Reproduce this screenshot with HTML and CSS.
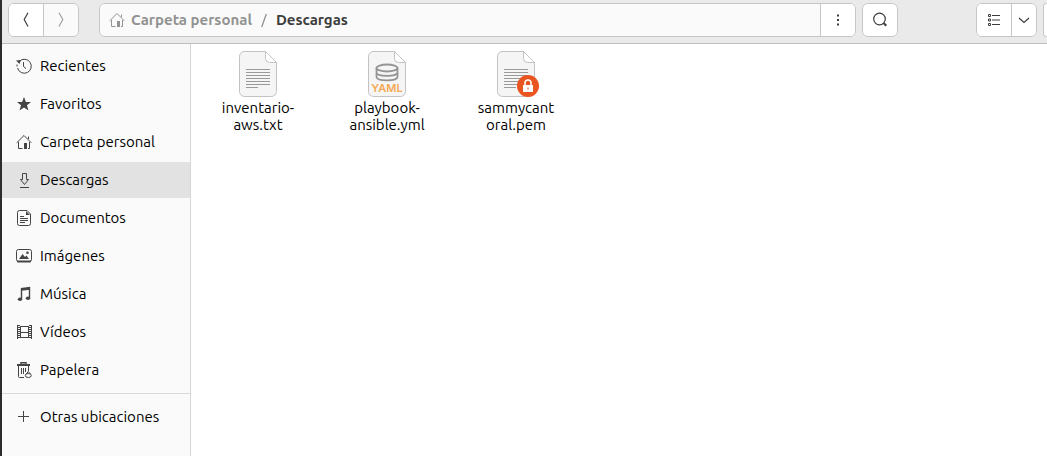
FILE: index.html
```html
<!DOCTYPE html>
<html lang="es">
<head>
<meta charset="utf-8">
<title>Descargas</title>
<link rel="stylesheet" href="styles.css">
</head>
<body>
<svg class="defs" aria-hidden="true">
  <symbol id="home" viewBox="0 0 16 16">
    <path d="M.7 8.800 8 1.500l7.300 7.300M2.500 8v6.500h4M13.500 8v6.500H12M12.500 5V2.500" fill="none" stroke="currentColor"/>
    <path d="M8 9h3v6H8z" fill="currentColor"/>
  </symbol>
  <symbol id="page" viewBox="0 0 38 46">
    <path d="M5 .5h21.500l11 11V40.500a5 5 0 0 1-5 5H5.500a5 5 0 0 1-5-5V5.500a5 5 0 0 1 5-5z" fill="#f5f5f5" stroke="#c2c2c2"/>
    <path d="M26.500.5v7a4 4 0 0 0 4 4h7z" fill="#fff" stroke="#c2c2c2"/>
  </symbol>
  <symbol id="lines" viewBox="0 0 38 46">
    <path d="M7 18.500h24M7 21.500h24M7 24.500h24M7 27.500h24M7 30.500h24M7 33.500h24M7 36.500h12" stroke="#999" fill="none"/>
  </symbol>
</svg>
<div class="window">
  <header class="toolbar">
    <div class="group">
      <button class="btn" aria-label="Atrás"><svg class="icon" viewBox="0 0 16 16"><path d="M10 .8 6.200 7.500 10 14.500" fill="none" stroke="currentColor" stroke-width="1.200"/></svg></button>
      <button class="btn dim" aria-label="Adelante" disabled><svg class="icon" viewBox="0 0 16 16"><path d="M6 .8 9.800 7.500 6 14.500" fill="none" stroke="currentColor" stroke-width="1.200"/></svg></button>
    </div>
    <div class="group pathbar">
      <nav class="crumbs">
        <a class="crumb" href="#personal"><svg class="icon"><use href="#home"/></svg>Carpeta personal</a>
        <svg class="slash" viewBox="0 0 6 15" aria-hidden="true"><path d="M5.300 1 .7 14" stroke="#8b8b8b" fill="none" stroke-width="1.200"/></svg>
        <a class="crumb current" href="#descargas">Descargas</a>
      </nav>
      <button class="btn" aria-label="Menú"><svg class="icon" viewBox="0 0 16 16"><path d="M7 2.500h2v2H7zM7 7h2v2H7zM7 11.500h2v2H7z" fill="currentColor"/></svg></button>
    </div>
    <div class="group search">
      <button class="btn" aria-label="Buscar"><svg class="icon" viewBox="0 0 16 16"><circle cx="7.500" cy="7" r="5.800" fill="none" stroke="currentColor" stroke-width="1.200"/><path d="m11.500 11 2.800 2.800" stroke="currentColor" stroke-width="2"/></svg></button>
    </div>
    <div class="group view">
      <button class="btn" aria-label="Vista de lista"><svg class="icon" viewBox="0 0 16 16"><path d="M2.500 2.500h2v2h-2zM2.500 7h2v2h-2zM2.500 11.500h2v2h-2z" fill="none" stroke="currentColor"/><path d="M6 3.500h8M6 8h8M6 12.500h8" stroke="currentColor"/></svg></button>
      <button class="btn narrow" aria-label="Opciones de vista"><svg class="icon" viewBox="0 0 16 16"><path d="m3 6 5 4.500L13 6" fill="none" stroke="currentColor" stroke-width="1.200"/></svg></button>
    </div>
    <div class="group menu"><button class="btn" aria-label="Menú principal"></button></div>
  </header>
  <div class="content">
    <nav class="sidebar">
      <a class="place" href="#recientes"><svg class="icon" viewBox="0 0 16 16"><path d="M3.400 3.200A7 7 0 1 1 1.500 10M1 6.500v2" fill="none" stroke="currentColor"/><path d="M0 2.500 5 2 3.500 6z" fill="currentColor"/><path d="M7.500 4v4.500l2.500 2" fill="none" stroke="currentColor"/></svg>Recientes</a>
      <a class="place" href="#favoritos"><svg class="icon" viewBox="0 0 16 16"><path d="m8 1 1.900 4.900 5.100.2-4 3.200 1.400 5.100L8 11.500l-4.400 2.900L5 9.300 1 6.100l5.100-.2z" fill="currentColor"/></svg>Favoritos</a>
      <a class="place" href="#personal"><svg class="icon"><use href="#home"/></svg>Carpeta personal</a>
      <a class="place selected" href="#descargas"><svg class="icon" viewBox="0 0 16 16"><path d="M6.500 1.500h4v6h2l-4 5-4-5h2zM4 15.500h9" fill="none" stroke="currentColor"/></svg>Descargas</a>
      <a class="place" href="#documentos"><svg class="icon" viewBox="0 0 16 16"><path d="M3.500.5H11L14.500 4v9.500a2 2 0 0 1-2 2h-9a2 2 0 0 1-2-2v-11a2 2 0 0 1 2-2z" fill="none" stroke="currentColor"/><path d="M10 1v4h4z" fill="currentColor"/><path d="M4 6.500h4M4 8.500h8M4 10.500h8M4 12.500h5" stroke="currentColor"/></svg>Documentos</a>
      <a class="place" href="#imagenes"><svg class="icon" viewBox="0 0 16 16"><rect x=".5" y="1.500" width="15" height="12" rx="2" fill="none" stroke="currentColor"/><path d="M1 12.500h14v1a1 1 0 0 1-1 1H2a1 1 0 0 1-1-1zM3 11l3.500-5L9 9l1.500-1.500L13 11z" fill="currentColor"/><circle cx="11.500" cy="4.700" r="1.300" fill="currentColor"/></svg>Imágenes</a>
      <a class="place" href="#musica"><svg class="icon" viewBox="0 0 16 16"><path d="M5.500 13V2.500l8-1V12M5.500 4l8-1" fill="none" stroke="currentColor" stroke-width="1.400"/><ellipse cx="4" cy="13.300" rx="2.200" ry="1.700" fill="currentColor"/><ellipse cx="12" cy="12.300" rx="2.200" ry="1.700" fill="currentColor"/></svg>Música</a>
      <a class="place" href="#videos"><svg class="icon" viewBox="0 0 16 16"><path d="M4 2.500h9M4 8.500h9M4 13.500h9M4.500 2v12M12.500 2v12" fill="none" stroke="currentColor"/><path d="M2.500 1v14M14.500 1v14" stroke="currentColor" stroke-width="3" stroke-dasharray="1 1"/><path d="M1.500 1v14M15.500 1v14" stroke="currentColor"/></svg>Vídeos</a>
      <a class="place" href="#papelera"><svg class="icon" viewBox="0 0 16 16"><path d="M1 3h13" stroke="currentColor" stroke-width="2"/><path d="M5 2V.700h5V2" fill="none" stroke="currentColor" stroke-width="1.400"/><path d="M2.500 4v10.500a1 1 0 0 0 1 1H8M12.500 4v5M5.500 6v6M7.500 6v6M9.500 6v4" fill="none" stroke="currentColor"/><ellipse cx="12.300" cy="13.500" rx="3" ry="2" fill="#fafafa" stroke="currentColor"/><path d="m10.300 12 2-2.500 2 2.500" fill="none" stroke="currentColor"/></svg>Papelera</a>
      <a class="place other" href="#otras"><svg class="icon" viewBox="0 0 16 16"><path d="M2 7.500h11M7.500 2v11" stroke="currentColor"/></svg>Otras ubicaciones</a>
    </nav>
    <main class="files">
      <figure class="file">
        <svg class="thumb" viewBox="0 0 38 46"><use href="#page"/><use href="#lines"/></svg>
        <figcaption>inventario-<br>aws.txt</figcaption>
      </figure>
      <figure class="file">
        <svg class="thumb" viewBox="0 0 38 46"><use href="#page"/>
          <g fill="#f5f5f5" stroke="#949494" stroke-width="1.800"><path d="M8.500 22v4c0 4.500 21 4.500 21 0v-4"/><path d="M8.500 17v4.500c0 4.500 21 4.500 21 0V17"/><ellipse cx="19" cy="17" rx="10.500" ry="3.500"/></g>
          <text class="yaml" x="19" y="41" text-anchor="middle">YAML</text></svg>
        <figcaption>playbook-<br>ansible.yml</figcaption>
      </figure>
      <figure class="file">
        <svg class="thumb" viewBox="0 0 38 46"><use href="#page"/><use href="#lines"/>
          <circle cx="31" cy="35" r="11" fill="#e95420"/><path d="M26 34h10v7H26z" fill="#fff"/><path d="M28 34v-2a3 3 0 0 1 6 0v2" fill="none" stroke="#fff" stroke-width="1.500"/><path d="M30.500 36.500h1v2h-1z" fill="#e95420"/></svg>
        <figcaption>sammycant<br>oral.pem</figcaption>
      </figure>
    </main>
  </div>
</div>
</body>
</html>
```
FILE: styles.css
```css
* { box-sizing: border-box; }
body {
  margin: 0;
  font-family: Ubuntu, "Noto Sans", "Open Sans", sans-serif;
  font-size: 15px;
  line-height: 16px;
  color: #000;
  background: #fff;
}
a { color: inherit; text-decoration: none; }
.defs { display: none; }
.window {
  display: flex;
  flex-direction: column;
  min-height: 100vh;
  border-left: 2px solid #2c2c2c;
  overflow: hidden;
}
.toolbar {
  display: flex;
  padding: 3px 0 6px 6px;
  background: #eaeaea;
  border-bottom: 1px solid #bdbdbd;
}
.group {
  display: flex;
  height: 34px;
  border: 1px solid #c6c6c6;
  border-radius: 6px;
  background: #fff;
  overflow: hidden;
}
.btn {
  display: grid;
  place-items: center;
  width: 34px;
  padding: 0;
  border: 0;
  background: #fff;
  color: #3d3d3d;
}
.btn + .btn, .crumbs + .btn { width: 35px; border-left: 1px solid #c6c6c6; }
.btn.dim { background: #fafafa; color: #a0a0a0; }
.btn + .btn.narrow { width: 25px; }
.icon { flex: none; width: 16px; height: 16px; }
.pathbar { flex: 1; margin-left: 20px; }
.crumbs {
  display: flex;
  flex: 1;
  align-items: center;
  gap: 9px;
  padding-left: 9px;
  background: #fafafa;
  font-weight: 700;
}
.crumb { display: flex; align-items: center; gap: 6px; color: #929292; }
.current { color: #3d3d3d; }
.slash { width: 6px; height: 15px; }
.search { margin-left: 6px; }
.view { margin-left: 78px; }
.menu {
  width: 4px;
  margin-left: 6px;
  border-right: 0;
  border-radius: 6px 0 0 6px;
}
.content { display: flex; flex: 1; }
.sidebar {
  display: flex;
  flex-direction: column;
  flex: none;
  gap: 2px;
  width: 189px;
  padding-top: 4px;
  background: #fafafa;
  border-right: 1px solid #d6d6d6;
}
.place {
  display: flex;
  align-items: center;
  gap: 8px;
  height: 36px;
  padding-left: 14px;
}
.place .icon { color: #444; }
.selected { background: #e2e2e2; }
.other {
  height: 47px;
  margin-top: 3px;
  border-top: 1px solid #dadada;
}
.files {
  display: flex;
  flex: 1;
  flex-wrap: wrap;
  align-content: flex-start;
  column-gap: 1px;
  padding: 7px 3px;
}
.file {
  display: flex;
  flex-direction: column;
  align-items: center;
  width: 128px;
  margin: 0;
}
.thumb { width: 38px; height: 46px; overflow: visible; }
.file figcaption { margin-top: 2px; line-height: 17px; text-align: center; }
.yaml {
  font-family: Inter, sans-serif;
  font-size: 11px;
  font-weight: 600;
  fill: #f4a951;
}
```
